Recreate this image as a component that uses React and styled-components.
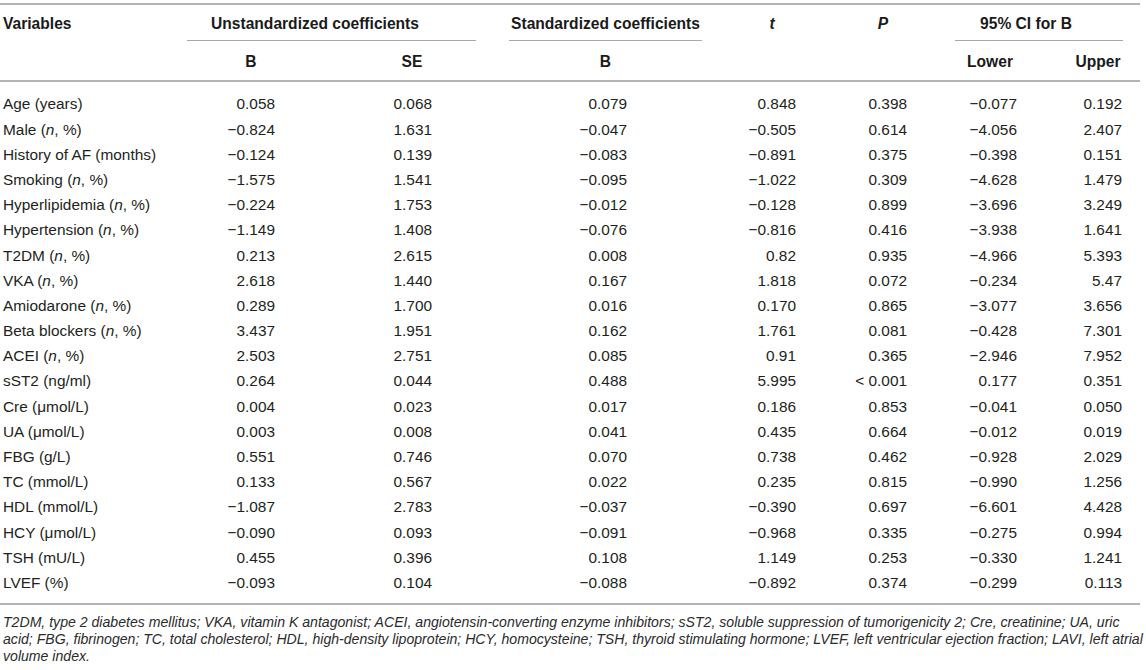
import React from 'react';
import styled, { createGlobalStyle } from 'styled-components';

const GlobalStyle = createGlobalStyle`
  body {
    margin: 0;
    background: #fff;
    font-family: "Liberation Sans", Arial, sans-serif;
    color: #231f20;
  }
`;

// column widths and right padding for the numbers
const cols = [
  { w: 187, pad: 0 },
  { w: 128, pad: 40 },
  { w: 194, pad: 77 },
  { w: 193, pad: 75 },
  { w: 140, pad: 46 },
  { w: 82, pad: 17 },
  { w: 132, pad: 39 },
  { w: 84, pad: 18 },
];
const template = cols.map(c => `${c.w}px`).join(' ');

const rows = [
  ['Age (years)', null, '0.058', '0.068', '0.079', '0.848', '0.398', '−0.077', '0.192'],
  ['Male', 'n', '−0.824', '1.631', '−0.047', '−0.505', '0.614', '−4.056', '2.407'],
  ['History of AF (months)', null, '−0.124', '0.139', '−0.083', '−0.891', '0.375', '−0.398', '0.151'],
  ['Smoking', 'n', '−1.575', '1.541', '−0.095', '−1.022', '0.309', '−4.628', '1.479'],
  ['Hyperlipidemia', 'n', '−0.224', '1.753', '−0.012', '−0.128', '0.899', '−3.696', '3.249'],
  ['Hypertension', 'n', '−1.149', '1.408', '−0.076', '−0.816', '0.416', '−3.938', '1.641'],
  ['T2DM', 'n', '0.213', '2.615', '0.008', '0.82', '0.935', '−4.966', '5.393'],
  ['VKA', 'n', '2.618', '1.440', '0.167', '1.818', '0.072', '−0.234', '5.47'],
  ['Amiodarone', 'n', '0.289', '1.700', '0.016', '0.170', '0.865', '−3.077', '3.656'],
  ['Beta blockers', 'n', '3.437', '1.951', '0.162', '1.761', '0.081', '−0.428', '7.301'],
  ['ACEI', 'n', '2.503', '2.751', '0.085', '0.91', '0.365', '−2.946', '7.952'],
  ['sST2 (ng/ml)', null, '0.264', '0.044', '0.488', '5.995', '< 0.001', '0.177', '0.351'],
  ['Cre (μmol/L)', null, '0.004', '0.023', '0.017', '0.186', '0.853', '−0.041', '0.050'],
  ['UA (μmol/L)', null, '0.003', '0.008', '0.041', '0.435', '0.664', '−0.012', '0.019'],
  ['FBG (g/L)', null, '0.551', '0.746', '0.070', '0.738', '0.462', '−0.928', '2.029'],
  ['TC (mmol/L)', null, '0.133', '0.567', '0.022', '0.235', '0.815', '−0.990', '1.256'],
  ['HDL (mmol/L)', null, '−1.087', '2.783', '−0.037', '−0.390', '0.697', '−6.601', '4.428'],
  ['HCY (μmol/L)', null, '−0.090', '0.093', '−0.091', '−0.968', '0.335', '−0.275', '0.994'],
  ['TSH (mU/L)', null, '0.455', '0.396', '0.108', '1.149', '0.253', '−0.330', '1.241'],
  ['LVEF (%)', null, '−0.093', '0.104', '−0.088', '−0.892', '0.374', '−0.299', '0.113'],
];

const Table = styled.div`
  width: 1140px;
  margin-top: 3px;
  border-top: 2px solid #b4b4b4;
  font-size: 15.4px;
`;

const Head = styled.div`
  display: grid;
  grid-template-columns: ${template};
  grid-template-rows: 36px 39px;
  border-bottom: 2px solid #b4b4b4;
  font-weight: bold;
  font-size: 15.6px;
  color: #1a1a1a;
`;

const HeadCell = styled.div`
  grid-column: ${p => p.col};
  grid-row: ${p => p.row || 'auto'};
  padding-top: ${p => (p.sub ? 12 : 10)}px;
  padding-left: ${p => p.left || 0}px;
  padding-right: ${p => p.right || 0}px;
  line-height: 18px;
  white-space: nowrap;
  text-align: ${p => p.align || 'center'};
  font-style: ${p => (p.italic ? 'italic' : 'normal')};
`;

const GroupLine = styled.div`
  height: 1px;
  background: #a8a8a8;
  margin: 7px ${p => p.mr || 0}px 0 ${p => p.ml || 0}px;
`;

const Body = styled.div`
  padding: 9.4px 0 7.6px;
  border-bottom: 2px solid #b4b4b4;
`;

const Row = styled.div`
  display: grid;
  grid-template-columns: ${template};
  height: 25.2px;
  line-height: 25.2px;
`;

const Label = styled.div`
  padding-left: 3px;
  white-space: nowrap;
`;

const Num = styled.div`
  text-align: right;
  padding-right: ${p => p.pad}px;
  white-space: nowrap;
`;

const Note = styled.p`
  margin: 0;
  padding: 9.5px 0 0 3px;
  font-size: 14.1px;
  line-height: 17px;
  font-style: italic;
  white-space: nowrap;
  color: #2b2b2b;
`;

export default function App() {
  return (
    <>
      <GlobalStyle />
      <Table>
        <Head>
          <HeadCell col="1" row="1 / 3" align="left" left={3}>Variables</HeadCell>
          <HeadCell col="2 / 4" row="1" align="left" left={24}>
            Unstandardized coefficients
            <GroupLine ml={-24} mr={33} />
          </HeadCell>
          <HeadCell col="4" row="1">
            Standardized coefficients
            <GroupLine />
          </HeadCell>
          <HeadCell col="5" row="1 / 3" italic>t</HeadCell>
          <HeadCell col="6" row="1 / 3" italic>P</HeadCell>
          <HeadCell col="7 / 9" row="1" right={12}>
            95% CI for B
            <GroupLine ml={31} mr={5} />
          </HeadCell>
          <HeadCell col="2" row="2" sub>B</HeadCell>
          <HeadCell col="3" row="2" sub>SE</HeadCell>
          <HeadCell col="4" row="2" sub>B</HeadCell>
          <HeadCell col="7" row="2" sub>Lower</HeadCell>
          <HeadCell col="8" row="2" sub>Upper</HeadCell>
        </Head>
        <Body>
          {rows.map(([name, it, ...vals]) => (
            <Row key={name}>
              <Label>
                {it ? <>{name} (<i>{it}</i>, %)</> : name}
              </Label>
              {vals.map((v, i) => (
                <Num key={i} pad={cols[i + 1].pad}>{v}</Num>
              ))}
            </Row>
          ))}
        </Body>
      </Table>
      <Note>
        T2DM, type 2 diabetes mellitus; VKA, vitamin K antagonist; ACEI, angiotensin-converting enzyme inhibitors; sST2, soluble suppression of tumorigenicity 2; Cre, creatinine; UA, uric
        <br />
        acid; FBG, fibrinogen; TC, total cholesterol; HDL, high-density lipoprotein; HCY, homocysteine; TSH, thyroid stimulating hormone; LVEF, left ventricular ejection fraction; LAVI, left atrial
        <br />
        volume index.
      </Note>
    </>
  );
}
